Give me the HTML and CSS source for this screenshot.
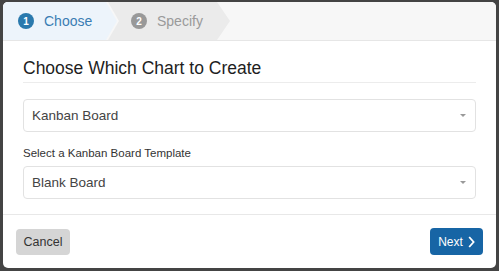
FILE: index.html
```html
<!DOCTYPE html>
<html>
<head>
<meta charset="utf-8">
<link rel="stylesheet" href="styles.css">
</head>
<body>
<div class="modal">
  <div class="modal-header">
    <div class="step step-active"><span class="badge">1</span><span class="step-label">Choose</span></div>
    <div class="step step-next"><span class="badge">2</span><span class="step-label">Specify</span></div>
  </div>
  <div class="modal-body">
    <h2 class="title">Choose Which Chart to Create</h2>
    <div class="select"><span>Kanban Board</span><span class="caret"></span></div>
    <label class="field-label">Select a Kanban Board Template</label>
    <div class="select"><span>Blank Board</span><span class="caret"></span></div>
  </div>
  <div class="modal-footer">
    <button class="btn btn-cancel">Cancel</button>
    <button class="btn btn-next">Next<svg class="chev" width="7" height="12" viewBox="0 0 7 12"><path d="M1.2 1 L5.6 6 L1.2 11" fill="none" stroke="#fff" stroke-width="1.8"/></svg></button>
  </div>
</div>
</body>
</html>
```

FILE: styles.css
```css
html, body {
  margin: 0;
  padding: 0;
}
body {
  width: 499px;
  height: 271px;
  background: #444;
  font-family: "Liberation Sans", Arial, sans-serif;
  overflow: hidden;
}
.modal {
  margin: 2px 3px 3px 3px;
  height: 266px;
  background: #fff;
  border-radius: 5px;
  overflow: hidden;
  display: flex;
  flex-direction: column;
}
.modal-header {
  height: 38px;
  background: #f7f7f7;
  border-bottom: 1px solid #e6e6e6;
  display: flex;
}
.step {
  height: 38px;
  display: flex;
  align-items: center;
  font-size: 14px;
  box-sizing: border-box;
}
.step-active {
  width: 114px;
  padding-left: 15px;
  background: #edf4fb;
  color: #3a7db3;
  clip-path: polygon(0 0, calc(100% - 11px) 0, 100% 50%, calc(100% - 11px) 100%, 0 100%);
}
.step-next {
  width: 122px;
  margin-left: -9px;
  padding-left: 23px;
  background: #ebebeb;
  color: #9a9a9a;
  clip-path: polygon(0 0, calc(100% - 13px) 0, 100% 50%, calc(100% - 13px) 100%, 0 100%, 11px 50%);
}
.badge {
  width: 16px;
  height: 16px;
  border-radius: 50%;
  color: #fff;
  font-size: 10px;
  font-weight: bold;
  display: flex;
  align-items: center;
  justify-content: center;
  margin-right: 10px;
}
.step-active .badge { background: #2a79ad; }
.step-next .badge { background: #999; }
.modal-body {
  padding: 17px 20px 15px 20px;
  border-bottom: 1px solid #e8e8e8;
}
.title {
  margin: 0 0 16px 0;
  font-size: 17.5px;
  font-weight: normal;
  line-height: 20px;
  color: #1e1e1e;
  padding-bottom: 4px;
  border-bottom: 1px solid #ececec;
}
.select {
  height: 33px;
  box-sizing: border-box;
  border: 1px solid #e2e2e2;
  border-radius: 4px;
  display: flex;
  align-items: center;
  justify-content: space-between;
  padding: 0 9px 0 8px;
  font-size: 13.5px;
  color: #444;
}
.caret {
  width: 0;
  height: 0;
  border-left: 3px solid transparent;
  border-right: 3px solid transparent;
  border-top: 3px solid #999;
}
.field-label {
  display: block;
  margin: 14px 0 6px 0;
  font-size: 11.5px;
  line-height: 14px;
  color: #333;
}
.modal-footer {
  flex: 1;
  display: flex;
  align-items: center;
  justify-content: space-between;
  padding: 0 13px;
}
.btn {
  border: none;
  border-radius: 4px;
  font-family: "Liberation Sans", Arial, sans-serif;
  display: flex;
  align-items: center;
  justify-content: center;
  padding: 0;
}
.btn-cancel {
  width: 54px;
  height: 26px;
  background: #d5d5d5;
  color: #333;
  font-size: 12.5px;
}
.btn-next {
  width: 53px;
  height: 27px;
  background: #1765a5;
  color: #fff;
  font-size: 12px;
  gap: 5px;
}
```
